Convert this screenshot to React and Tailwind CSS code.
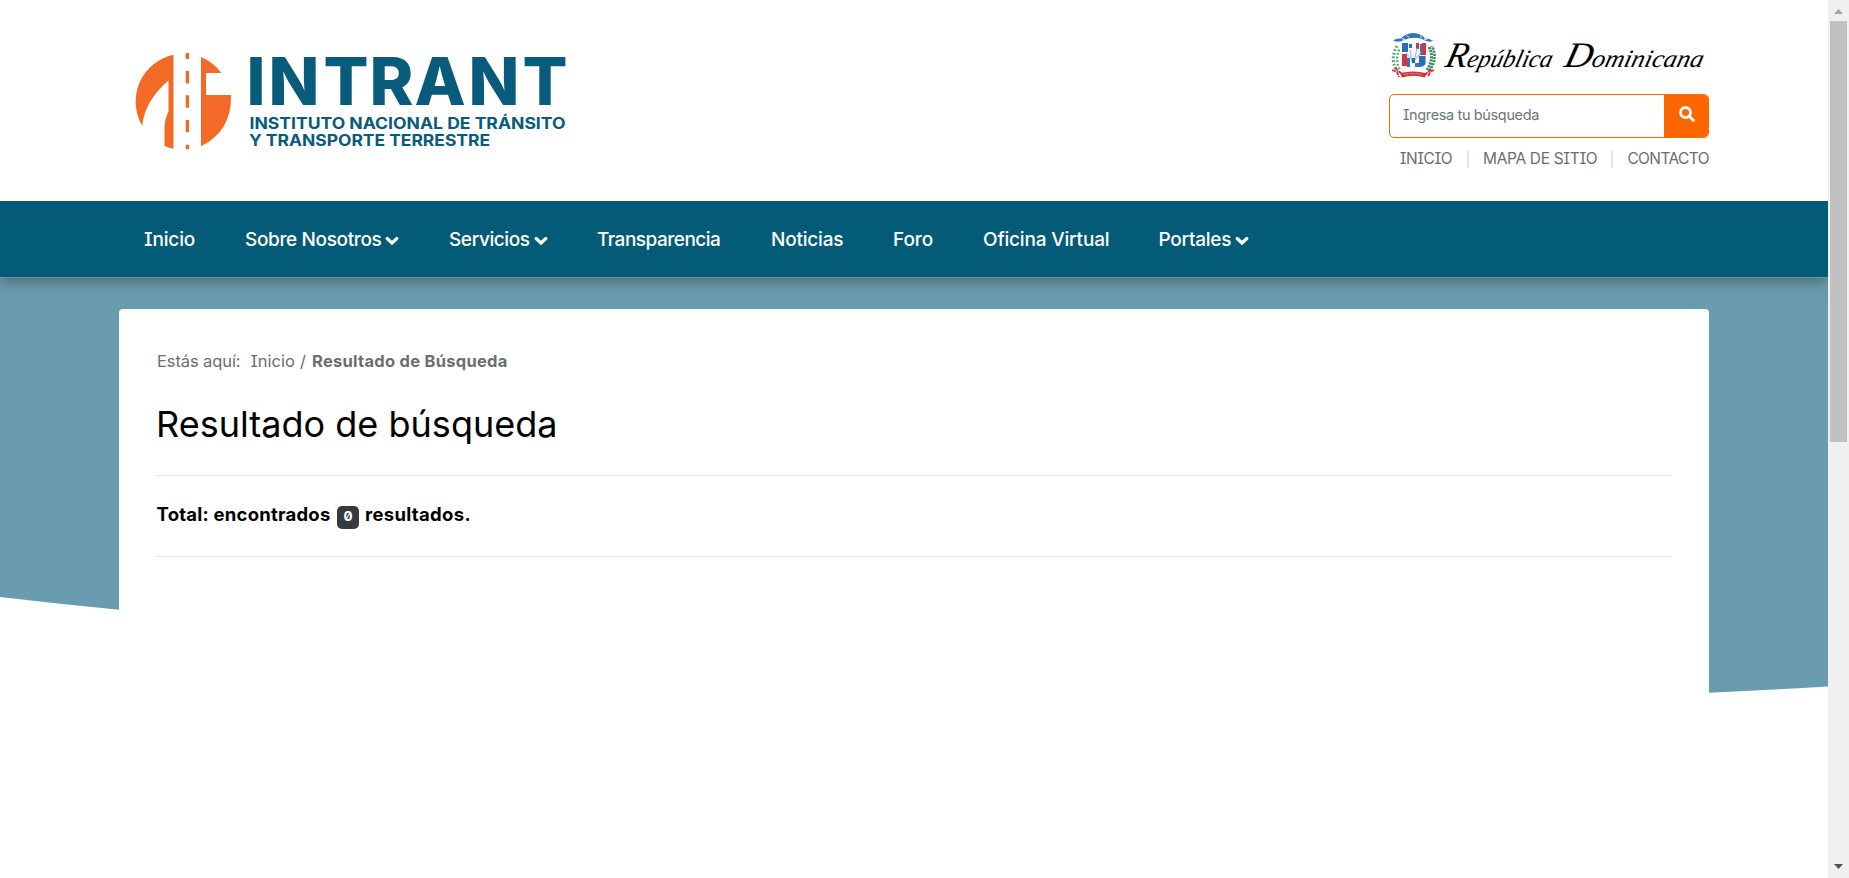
const NAV = [
  { label: "Inicio", arrow: false, box: "w-[101px]", track: "tracking-[-0.15px]" },
  { label: "Sobre Nosotros", arrow: true, box: "w-[204px]", track: "tracking-[-0.36px]" },
  { label: "Servicios", arrow: true, box: "w-[148px]", track: "tracking-[-0.4px]" },
  { label: "Transparencia", arrow: false, box: "w-[174px]", track: "tracking-[-0.5px]" },
  { label: "Noticias", arrow: false, box: "w-[122px]", track: "tracking-[-0.2px]" },
  { label: "Foro", arrow: false, box: "w-[90px]", track: "tracking-[-0.1px]" },
  { label: "Oficina Virtual", arrow: false, box: "w-[175.5px]", track: "tracking-[-0.18px]" },
  { label: "Portales", arrow: true, box: "w-[100px]", track: "tracking-[-0.25px]" },
];

function Logo() {
  return (
    <svg width="440" height="110" viewBox="130 47 440 110" className="block [font-feature-settings:normal]" fontFamily="Inter, sans-serif" fill="#085b7b">
      <g fill="#f26a26">
        <path d="M173.500 54.700A48 48 0 0 0 142.300 126C144 107 155 92 168.500 80.500V111.500C166 117 164.500 122 164.500 128V146Q169 148 173.500 148.700Z" />
        <path d="M201 57Q213 62 221.500 73H206V95H231Q232 131 201 146.300Z" />
        <path d="M185.700 53h3.400v6h-3.400zM185.700 71h3.400v12.500h-3.400zM185.700 95.300h3.400v12.500h-3.400zM185.700 120h3.400v12.300h-3.400zM185.700 144.700h3.400v4.500h-3.400z" />
      </g>
      <text y="105.400" fontSize="66.500" fontWeight="800" x="246.500 268.500 323.500 369.500 414.500 468.500 522.500">INTRANT</text>
      <text x="249.500" y="129.200" fontSize="15.500" fontWeight="700" textLength="316" lengthAdjust="spacingAndGlyphs">INSTITUTO NACIONAL DE TRÁNSITO</text>
      <text x="249" y="146.200" fontSize="15.500" fontWeight="700" textLength="241" lengthAdjust="spacingAndGlyphs">Y TRANSPORTE TERRESTRE</text>
    </svg>
  );
}

function Emblem() {
  return (
    <svg width="320" height="62" viewBox="1389 26 320 62" className="block">
      <path d="M1393 40.500Q1397 38 1401 38.500Q1405 33.500 1413 33Q1422 33.500 1425 38.500Q1430 38 1433 41L1430 41.800Q1425 41 1422 39Q1413 36 1404 40Q1398 43 1393 40.500Z" fill="#2d77bd" />
      <path d="M1402 38.500l3 1.200M1407 35.500l2 2M1420 36l2 1.500M1424 39l3 .5" stroke="#fff" strokeWidth="1" />
      <g fill="none" stroke="#4fa878" strokeWidth="3" strokeDasharray="1.800 1.900">
        <path d="M1397 46Q1390 58 1396 69" />
        <path d="M1400 48Q1394 59 1400 70" strokeWidth="2.400" strokeDashoffset="2" />
      </g>
      <g fill="none" stroke="#3b8a60" strokeWidth="3" strokeDasharray="2.200 1">
        <path d="M1429 47Q1435 58 1427 70" />
        <path d="M1432 46Q1438 58 1430 70" strokeWidth="2.600" strokeDashoffset="1.500" />
      </g>
      <path d="M1402 43H1426V65Q1424 68 1413.500 69Q1403 68 1402 65Z" fill="#f4f6fb" />
      <path d="M1402 43h6v9h-6zM1409 44h3v4h-3zM1419 56h6.500v8q-2 3-6.500 3z" fill="#2a6cb8" />
      <path d="M1416 43h3v6h-3zM1422 43h4v12h-4zM1402 54h5v12h-5z" fill="#d8333f" />
      <path d="M1420 44h2v11h-2zM1407 58h3v9h-3zM1415 63h4v4h-4z" fill="#3b74be" />
      <path d="M1410 50l2 12M1417 48l-3 15M1406 53l6 7M1421 52l-6 8" stroke="#9db4dc" strokeWidth="1" />
      <path d="M1412 58h3v5h-3z" fill="#2b66ab" />
      <path d="M1392 70l5 2 2 5M1395 68l7 6M1434 70l-4 2-2 5M1431 69l-6 6" stroke="#d02d3c" strokeWidth="1.800" fill="none" strokeDasharray="4 .8" />
      <path d="M1400 73Q1413 70 1426 73L1425 77.500Q1413 74 1402 77.500Z" fill="#d5303d" />
      <path d="M1404 74.500Q1413 72.500 1422 74.500" stroke="#f3b8bc" strokeWidth="1" strokeDasharray="1.500 1" fill="none" />
      <g fontFamily="'Liberation Serif', serif" fontStyle="italic" fill="#000" transform="translate(0 67) skewX(-14)">
        <text x="1444" y="0" textLength="107" lengthAdjust="spacingAndGlyphs" fontSize="25"><tspan fontSize="36">R</tspan>epública</text>
        <text x="1563" y="0" textLength="139" lengthAdjust="spacingAndGlyphs" fontSize="25"><tspan fontSize="36">D</tspan>ominicana</text>
      </g>
    </svg>
  );
}

function Chevron() {
  return (
    <svg width="14" height="10" viewBox="0 0 14 10" className="mt-[2px] ml-1 shrink-0">
      <path d="M2.200 2.500L7 7L11.800 2.500" fill="none" stroke="#fff" strokeWidth="3.200" strokeLinecap="round" strokeLinejoin="miter" />
    </svg>
  );
}

function SearchIcon() {
  return (
    <svg width="16" height="16" viewBox="0 0 16 16" className="-mt-[5px] ml-[2px]">
      <circle cx="6.500" cy="6.500" r="5" fill="none" stroke="#fff" strokeWidth="2.800" />
      <path d="M10.300 10.300L14.200 14.200" stroke="#fff" strokeWidth="3" strokeLinecap="round" />
    </svg>
  );
}

function Scrollbar() {
  return (
    <div className="z-30 flex h-full w-[21px] shrink-0 flex-col items-center bg-[#f0f0f0]">
      <svg width="9" height="21" viewBox="0 0 9 21" className="shrink-0"><path d="M0 14L4.500 9L9 14Z" fill="#a3a3a3" /></svg>
      <div className="-ml-px h-[421px] w-[17px] bg-[#c1c1c1]" />
      <svg width="9" height="5" viewBox="0 0 9 5" className="mt-auto mb-[9px]"><path d="M0 0H9L4.500 5Z" fill="#505050" /></svg>
    </div>
  );
}

export default function App() {
  return (
    <div className="flex h-[878px] w-[1849px] overflow-hidden bg-white font-[Inter,'Noto_Sans',sans-serif] [font-feature-settings:'cv08','zero']">
      <div className="flex h-full w-[1828px] flex-col">
        <header className="z-20 flex h-[201px] shrink-0 justify-between bg-white pr-[119px] pl-[130px]">
          <div className="pt-[47px]"><Logo /></div>
          <div className="w-[320px] pt-[26px]">
            <Emblem />
            <div className="mt-[6px] flex h-[44px] overflow-hidden rounded-[5px] border border-[#ff6600]">
              <div className="flex flex-1 items-center pl-[13px] text-[14.5px] tracking-[-0.36px] whitespace-nowrap text-[#6c757d]"><span className="-mt-[2px]">Ingresa tu búsqueda</span></div>
              <div className="flex w-[44px] items-center justify-center bg-[#ff6600]"><SearchIcon /></div>
            </div>
            <div className="mt-[9px] flex h-6 items-center justify-end text-[15.5px] whitespace-nowrap text-[#6b6d71]">
              <span className="tracking-[-0.5px]">INICIO</span>
              <i className="mr-[14px] ml-[15px] h-[17px] w-[2px] bg-[#e6e3ea]" />
              <span className="tracking-[-0.35px]">MAPA DE SITIO</span>
              <i className="mr-[14px] ml-[14px] h-[17px] w-[2px] bg-[#e6e3ea]" />
              <span className="tracking-[-0.6px]">CONTACTO</span>
            </div>
          </div>
        </header>

        <nav className="z-10 flex h-[77px] shrink-0 items-center border-b border-[#6295a8] bg-[#045b78] pl-[144px] text-[19px] font-medium text-white shadow-[0_4px_12px_rgba(60,60,60,0.5)]">
          {NAV.map((n) => (
            <a key={n.label} className={`mt-[2px] flex items-center whitespace-nowrap ${n.box} ${n.track}`}>
              <span>{n.label}</span>
              {n.arrow && <Chevron />}
            </a>
          ))}
        </nav>

        <main className="grid flex-1">
          <svg width="1828" height="600" viewBox="0 278 1828 600" className="col-start-1 row-start-1">
            <path d="M0 278H1828V686.500Q1770 690 1709 692.700Q1300 712 800 675Q400 642 119 609.800Q60 604 0 597Z" fill="#699cae" />
          </svg>
          <section className="col-start-1 row-start-1 mx-[119px] mt-[31px] rounded-t-[4px] bg-white pr-[37px] pl-[38px]">
            <div className="flex pt-[40px] text-[16.5px] leading-6 whitespace-pre text-[#6b6d71]">
              <span className="w-[93.500px] tracking-[-0.1px]">Estás aquí:</span>
              <span className="w-[49.500px]">Inicio</span>
              <span className="w-[12px]">/</span>
              <b className="font-bold tracking-[0.27px]">Resultado de Búsqueda</b>
            </div>
            <h1 className="mt-[30px] -ml-[1px] text-[36px] leading-[42px] tracking-[0.02px] text-black">Resultado de búsqueda</h1>
            <hr className="mt-[30px] border-t border-[#e2e3e4]" />
            <div className="flex h-[80px] items-center pb-[3px] text-[18.5px] font-bold whitespace-nowrap text-black">
              <span className="-ml-[0.500px] w-[180.500px] tracking-[0.23px]">Total: encontrados</span>
              <span className="mt-[5px] flex h-[23px] w-[22px] items-center justify-center rounded-[5px] bg-[#343a40] pb-[2px] text-[13.5px] text-white">0</span>
              <span className="ml-[6px] tracking-[0.32px]">resultados.</span>
            </div>
            <hr className="border-t border-[#e2e3e4]" />
          </section>
        </main>
      </div>
      <Scrollbar />
    </div>
  );
}
